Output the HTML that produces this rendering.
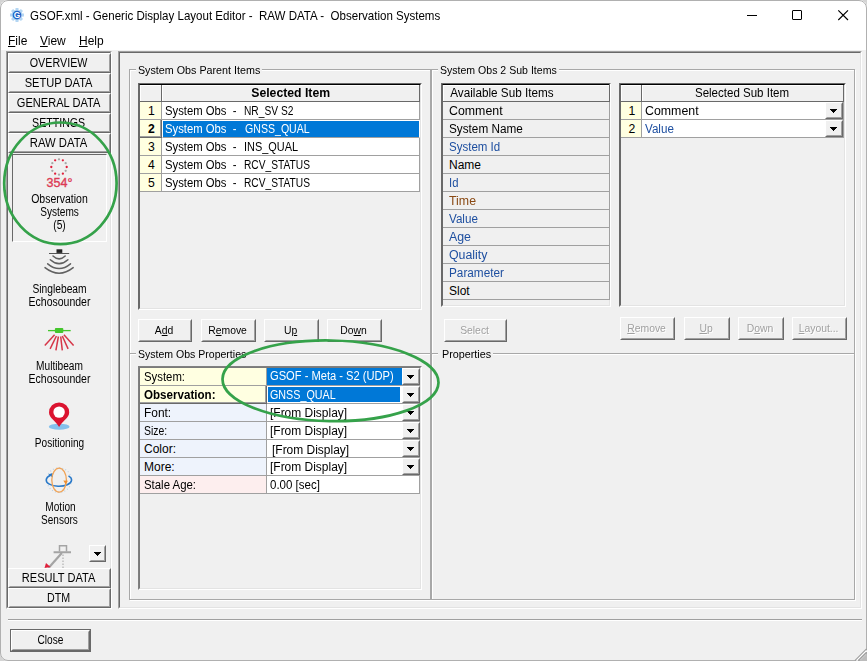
<!DOCTYPE html>
<html><head><meta charset="utf-8">
<title>GSOF.xml - Generic Display Layout Editor</title>
<style>
*{box-sizing:border-box;margin:0;padding:0}
html,body{width:867px;height:661px;overflow:hidden;background:#d4d4d4}
body{font-family:"Liberation Sans",sans-serif;font-size:12px;color:#000;position:relative}
.abs{position:absolute}
#win{position:absolute;left:0;top:0;width:867px;height:661px;background:#f0f0f0;border-radius:8px 8px 0 8px;overflow:hidden}
#frame{position:absolute;left:0;top:0;width:867px;height:661px;border:1px solid #b0b0b0;border-radius:8px 8px 0 8px;z-index:50}
#top{position:absolute;left:0;top:0;width:867px;height:50px;background:#fff}
.t{position:absolute;white-space:pre;line-height:14px;font-size:12.3px;transform:scaleX(.975);transform-origin:0 50%}
.sunk{position:absolute;border:1px solid;border-color:#a0a0a0 #fff #fff #a0a0a0}
.sunk>.in{position:absolute;left:0;top:0;right:0;bottom:0;border:1px solid;border-color:#696969 #e3e3e3 #e3e3e3 #696969}
.btn{position:absolute;border:1px solid;border-color:#fff #696969 #696969 #fff;background:#f0f0f0}
.btn>.in{position:absolute;left:0;top:0;right:0;bottom:0;border:1px solid;border-color:#f0f0f0 #a0a0a0 #a0a0a0 #f0f0f0}
.btn span{position:absolute;left:0;right:0;text-align:center;white-space:nowrap}
.nav{left:8px;width:103px;height:20px}
.nav span{top:2px;padding-right:2px;font-size:12px;line-height:14px;transform:scaleX(0.89)}
.pb span{top:3px;padding-right:2px;font-size:11px;line-height:14px;transform:scaleX(.943)}
.pb.dis span{color:#a0a0a0;text-shadow:1px 1px 0 #fff}
.lbl{position:absolute;font-size:12px;line-height:13px;text-align:center;left:8px;width:103px;white-space:nowrap;transform:scaleX(0.875)}
.grp{position:absolute;border:1px solid #a8a8a8;box-shadow:1px 1px 0 #fff, inset 1px 1px 0 #fff}
.grp>b{position:absolute;left:5.500px;top:-7px;background:#f0f0f0;font-weight:normal;padding:0 2px;font-size:11px;line-height:14px;white-space:nowrap;transform:scaleX(.943);transform-origin:0 50%}
.grid{position:absolute;border:1px solid;border-color:#696969 #fff #fff #696969;background:#f0f0f0}
.grid>.in{position:absolute;left:0;top:0;right:0;bottom:0;border:1px solid;border-color:#000 #e3e3e3 #e3e3e3 #696969}
.c{position:absolute;white-space:pre;font-size:12px;line-height:14px;border-right:1px solid #a0a0a0;border-bottom:1px solid #a0a0a0;overflow:hidden;padding:2px 0 0 3px;background:#fff}
.g{background:#f0f0f0;padding-left:6px}
.x{display:inline-block;transform-origin:0 50%}
.h .x,.n .x{transform-origin:50% 50%}
.g2{border-color:#808080 #fff #fff #808080}
.g2>.in{border-color:#7a7a7a #e3e3e3 #e3e3e3 #7a7a7a}
.h{background:#f0f0f0;text-align:center;padding-left:0;padding-top:1px;border-color:#696969;box-shadow:inset 1px 1px 0 #fff}
.n{background:#ffffe1;text-align:center;padding-left:2px;font-size:12.2px}
.bl{color:#1e4fa0}
.br{color:#8a4a14}
.cb{position:absolute;width:18px;height:17px;border:1px solid;border-color:#fff #696969 #696969 #fff;background:#f0f0f0}
.cb:before{content:"";position:absolute;left:0;top:0;right:0;bottom:0;border:1px solid;border-color:#f0f0f0 #a0a0a0 #a0a0a0 #f0f0f0}
.cb:after{content:"";position:absolute;left:4px;top:6px;width:1px;height:1px;background:#000;box-shadow:1px 0px 0 #000,2px 0px 0 #000,3px 0px 0 #000,4px 0px 0 #000,5px 0px 0 #000,6px 0px 0 #000,1px 1px 0 #000,2px 1px 0 #000,3px 1px 0 #000,4px 1px 0 #000,5px 1px 0 #000,2px 2px 0 #000,3px 2px 0 #000,4px 2px 0 #000,3px 3px 0 #000}
u{text-decoration:underline}
</style></head><body>
<div id="win">
<div id="top"></div>
<!-- title -->
<svg class="abs" style="left:10px;top:8px" width="14" height="14" viewBox="0 0 16 16"><g fill="#b4d6f3"><circle cx="8" cy="8" r="6.300"/><g id="tt"><rect x="6.300" y="0" width="3.400" height="3"/><rect x="6.300" y="13" width="3.400" height="3"/><rect x="0" y="6.300" width="3" height="3.400"/><rect x="13" y="6.300" width="3" height="3.400"/></g><use href="#tt" transform="rotate(45 8 8)"/></g><circle cx="8" cy="8" r="5" fill="#1f64c8"/><text x="8" y="11.400" font-size="9.500" font-weight="bold" fill="#fff" text-anchor="middle" font-family="Liberation Sans, sans-serif">G</text></svg>
<div class="t" style="left:30px;top:9px;font-size:12.2px;transform:scaleX(.947);transform-origin:0 50%">GSOF.xml - Generic Display Layout Editor -  RAW DATA -  Observation Systems</div>
<svg class="abs" style="left:740px;top:5px" width="120" height="20" viewBox="0 0 120 20"><g stroke="#000" stroke-width="1" fill="none"><path d="M7 10.5h10"/><rect x="52.5" y="5.5" width="9" height="9" rx="0.5"/><path d="M98.300 5.300l9.700 9.700M108 5.300l-9.700 9.700" stroke-width="1.150"/></g></svg>
<!-- menu -->
<div class="t" style="left:8px;top:34px"><u>F</u>ile</div>
<div class="t" style="left:40px;top:34px"><u>V</u>iew</div>
<div class="t" style="left:79px;top:34px"><u>H</u>elp</div>

<!-- left panel -->
<div class="sunk" style="left:6px;top:51px;width:106px;height:558px"><div class="in"></div></div>
<div class="btn nav" style="top:53px"><div class="in"></div><span style="transform:scaleX(0.895)">OVERVIEW</span></div>
<div class="btn nav" style="top:73px"><div class="in"></div><span style="transform:scaleX(0.925)">SETUP DATA</span></div>
<div class="btn nav" style="top:93px"><div class="in"></div><span style="transform:scaleX(0.922)">GENERAL DATA</span></div>
<div class="btn nav" style="top:113px"><div class="in"></div><span style="transform:scaleX(0.885)">SETTINGS</span></div>
<div class="btn nav" style="top:133px"><div class="in"></div><span style="transform:scaleX(0.94)">RAW DATA</span></div>
<div class="btn nav" style="top:568px"><div class="in"></div><span style="transform:scaleX(0.92)">RESULT DATA</span></div>
<div class="btn nav" style="top:588px"><div class="in"></div><span style="transform:scaleX(0.89)">DTM</span></div>

<!-- selected item box -->
<div class="abs" style="left:12px;top:154px;width:95px;height:88px;border:1px solid;border-color:#696969 #fff #fff #696969"></div>
<svg class="abs" style="left:49px;top:157px" width="20" height="20" viewBox="-10 -10 20 20">
<g fill="#a8a8a8"><circle cx="0" cy="-7.7" r="1.150"/><circle cx="6.67" cy="-3.85" r="1.150"/><circle cx="6.67" cy="3.85" r="1.150"/><circle cx="0" cy="7.7" r="1.150"/><circle cx="-6.67" cy="3.85" r="1.150"/><circle cx="-6.67" cy="-3.85" r="1.150"/></g>
<g fill="#e0203c"><circle cx="3.85" cy="-6.67" r="1.150"/><circle cx="7.7" cy="0" r="1.150"/><circle cx="3.85" cy="6.67" r="1.150"/><circle cx="-3.85" cy="6.67" r="1.150"/><circle cx="-7.7" cy="0" r="1.150"/><circle cx="-3.85" cy="-6.67" r="1.150"/></g></svg>
<div class="lbl" style="top:177px;font-size:12.5px;color:#dc3a55;-webkit-text-stroke:0.35px #dc3a55;transform:none;left:8px">354°</div>
<div class="lbl" style="top:193px;transform:scaleX(0.875)">Observation</div>
<div class="lbl" style="top:206px;transform:scaleX(0.84)">Systems</div>
<div class="lbl" style="top:219px;transform:scaleX(0.85)">(5)</div>

<!-- singlebeam -->
<svg class="abs" style="left:40px;top:240px" width="40" height="40" viewBox="40 240 40 40"><rect x="56.5" y="249.3" width="5.8" height="3.6" fill="#222"/><path d="M49 253.5h20.200" stroke="#555" stroke-width="1"/><g fill="none" stroke="#606060" stroke-width="1.5" stroke-linecap="round"><path d="M53 256q6.100 5.800 12.200 0"/><path d="M50.300 259.700q8.800 7.900 17.600 0"/><path d="M47.700 263.800q11.400 9.400 22.800 0"/><path d="M45 267.600q14.100 11.200 28.200 0"/></g></svg>
<div class="lbl" style="top:283px;transform:scaleX(0.855)">Singlebeam</div>
<div class="lbl" style="top:296px;transform:scaleX(0.875)">Echosounder</div>
<!-- multibeam -->
<svg class="abs" style="left:40px;top:320px" width="40" height="36" viewBox="40 320 40 36"><path d="M48 330.600h22.700" stroke="#44c62c" stroke-width="1.300"/><rect x="54.900" y="328" width="8.400" height="4.900" rx="1" fill="#44c62c"/><g stroke="#d63648" stroke-width="1.500" fill="none"><path d="M54.600 334.800L44.800 345.500"/><path d="M56.400 336L50.100 348.900"/><path d="M58.400 336.500L55.900 350.400"/><path d="M60.700 336.500L62.300 350.400"/><path d="M62.300 336L68.100 348.900"/><path d="M63.900 334.800L73.600 345.500"/></g></svg>
<div class="lbl" style="top:360px;transform:scaleX(0.845)">Multibeam</div>
<div class="lbl" style="top:373px;transform:scaleX(0.875)">Echosounder</div>
<!-- positioning -->
<svg class="abs" style="left:40px;top:398px" width="40" height="36" viewBox="40 398 40 36"><ellipse cx="59.200" cy="426.700" rx="10.400" ry="3" fill="#85c1ec"/><path d="M59.100 427C56 421 49 418 49 412.500a10.100 10.100 0 0 1 20.200 0C69.200 418 62.200 421 59.100 427z" fill="#db1430"/><circle cx="59.100" cy="412.100" r="5.700" fill="#fff"/></svg>
<div class="lbl" style="top:437px;transform:scaleX(0.84)">Positioning</div>
<!-- motion -->
<svg class="abs" style="left:40px;top:462px" width="40" height="36" viewBox="40 462 40 36"><circle cx="59.100" cy="480.100" r="12.300" fill="none" stroke="#b8cfe4" stroke-width="1.100" stroke-dasharray="1 2.200"/><path d="M50.500 475.300A12.700 6.300 0 1 0 68.500 475.900" fill="none" stroke="#2878c8" stroke-width="1.500"/><path d="M48.300 474.600l4.200-1.500 0.300 4.300z" fill="#2878c8"/><ellipse cx="59.100" cy="480.100" rx="7.300" ry="12" fill="none" stroke="#f0a458" stroke-width="1.300"/><path d="M63.300 480.600l4.600 0.200-2.200 3.600z" fill="#f09030"/></svg>
<div class="lbl" style="top:501px;left:9px;transform:scaleX(0.84)">Motion</div>
<div class="lbl" style="top:514px;transform:scaleX(0.835)">Sensors</div>
<!-- partial icon -->
<svg class="abs" style="left:40px;top:540px" width="40" height="28" viewBox="40 540 40 28"><g stroke="#a4a4a4" fill="none"><path d="M59.500 551.500v-5.700h7v5.700" stroke-width="1.500"/><path d="M53.600 552.200h17.400" stroke-width="2"/><path d="M61.800 553L48.500 568" stroke-width="2.200"/><path d="M63 554.500v14" stroke-width="1.300" stroke-dasharray="1.500 1.500" stroke="#b4b4b4"/></g><path d="M44.500 568l1.500-5 4.500 4z" fill="#e0203c"/></svg>
<div class="cb" style="left:89px;top:545px;width:17px;height:17px"></div>

<!-- main panel -->
<div class="sunk" style="left:118px;top:51px;width:744px;height:558px"><div class="in"></div></div>

<!-- group boxes -->
<div class="grp" style="left:129px;top:69px;width:302px;height:285px"><b style="transform:scaleX(0.976)">System Obs Parent Items</b></div>
<div class="grp" style="left:129px;top:353px;width:302px;height:247px"><b style="transform:scaleX(0.958)">System Obs Properties</b></div>
<div class="grp" style="left:431px;top:69px;width:424px;height:285px"><b style="transform:scaleX(.96)">System Obs 2 Sub Items</b></div>
<div class="grp" style="left:431px;top:353px;width:424px;height:247px"><b style="padding-left:4px;transform:scaleX(0.982)">Properties</b></div>

<!-- grid 1 -->
<div class="grid" style="left:138px;top:83px;width:284px;height:227px"><div class="in"></div></div>
<div class="c h" style="left:140px;top:85px;width:22px;height:17px"></div>
<div class="c h" style="left:162px;top:85px;width:258px;height:17px;font-weight:bold"><span class="x" style="transform:scaleX(1.02)">Selected Item</span></div>
<div class="c n" style="left:140px;top:102px;width:22px;height:18px"><span class="x" style="transform:scaleX(1.0)">1</span></div><div class="c" style="left:162px;top:102px;width:258px;height:18px"><span class="x" style="transform:scaleX(.94)">System Obs  -</span><span class="x" style="position:absolute;left:81.7px;transform:scaleX(0.851)">NR_SV S2</span></div>
<div class="c n" style="left:140px;top:120px;width:22px;height:18px;font-weight:bold;border-color:#696969;box-shadow:inset -1px -1px 0 #a0a0a0"><span class="x" style="transform:scaleX(1.0)">2</span></div><div class="c" style="left:162px;top:120px;width:258px;height:18px;background:#0078d7;color:#fff;border:1px solid #fff;border-bottom-color:#a0a0a0;padding:1px 0 0 2px"><span class="x" style="transform:scaleX(.94)">System Obs  -</span><span class="x" style="position:absolute;left:81.7px;transform:scaleX(0.882)">GNSS_QUAL</span></div>
<div class="c n" style="left:140px;top:138px;width:22px;height:18px"><span class="x" style="transform:scaleX(1.0)">3</span></div><div class="c" style="left:162px;top:138px;width:258px;height:18px"><span class="x" style="transform:scaleX(.94)">System Obs  -</span><span class="x" style="position:absolute;left:81.7px;transform:scaleX(0.91)">INS_QUAL</span></div>
<div class="c n" style="left:140px;top:156px;width:22px;height:18px"><span class="x" style="transform:scaleX(1.0)">4</span></div><div class="c" style="left:162px;top:156px;width:258px;height:18px"><span class="x" style="transform:scaleX(.94)">System Obs  -</span><span class="x" style="position:absolute;left:81.7px;transform:scaleX(0.85)">RCV_STATUS</span></div>
<div class="c n" style="left:140px;top:174px;width:22px;height:18px"><span class="x" style="transform:scaleX(1.0)">5</span></div><div class="c" style="left:162px;top:174px;width:258px;height:18px"><span class="x" style="transform:scaleX(.94)">System Obs  -</span><span class="x" style="position:absolute;left:81.7px;transform:scaleX(0.85)">RCV_STATUS</span></div>

<!-- buttons under grid 1 -->
<div class="btn pb" style="left:138px;top:319px;width:54px;height:23px"><div class="in"></div><span>A<u>d</u>d</span></div>
<div class="btn pb" style="left:201px;top:319px;width:55px;height:23px"><div class="in"></div><span>R<u>e</u>move</span></div>
<div class="btn pb" style="left:264px;top:319px;width:55px;height:23px"><div class="in"></div><span>U<u>p</u></span></div>
<div class="btn pb" style="left:327px;top:319px;width:55px;height:23px"><div class="in"></div><span>Do<u>w</u>n</span></div>

<!-- props grid -->
<div class="grid g2" style="left:138px;top:366px;width:284px;height:224px"><div class="in"></div></div>
<div class="c" style="left:140px;top:368px;width:127px;height:18px;background:#ffffe1;padding-left:4px"><span class="x" style="transform:scaleX(0.946)">System:</span></div>
<div class="c" style="left:267px;top:368px;width:153px;height:18px;background:#0078d7;color:#fff;padding-top:1px"><span class="x" style="transform:scaleX(0.928)">GSOF - Meta - S2 (UDP)</span></div>
<div class="c" style="left:140px;top:386px;width:127px;height:18px;background:#ffffe1;padding-left:4px;font-weight:bold;border-color:#696969;box-shadow:inset -1px -1px 0 #a0a0a0"><span class="x" style="transform:scaleX(0.966)">Observation:</span></div>
<div class="c" style="left:267px;top:386px;width:153px;height:18px"><div class="abs" style="left:1px;top:1px;width:132px;height:15px;background:#0078d7;color:#fff;padding-left:2px;padding-top:1px"><span class="x" style="transform:scaleX(0.895)">GNSS_QUAL</span></div></div>
<div class="c" style="left:140px;top:404px;width:127px;height:18px;background:#eef3fc;padding-left:4px"><span class="x" style="transform:scaleX(0.994)">Font:</span></div><div class="c" style="left:267px;top:404px;width:153px;height:18px"><span class="x" style="transform:scaleX(0.997)">[From Display]</span></div>
<div class="c" style="left:140px;top:422px;width:127px;height:18px;background:#eef3fc;padding-left:4px"><span class="x" style="transform:scaleX(0.87)">Size:</span></div><div class="c" style="left:267px;top:422px;width:153px;height:18px"><span class="x" style="transform:scaleX(0.997)">[From Display]</span></div>
<div class="c" style="left:140px;top:440px;width:127px;height:18px;background:#eef3fc;padding-left:4px"><span class="x" style="transform:scaleX(1.0)">Color:</span></div><div class="c" style="left:267px;top:440px;width:153px;height:18px;padding:3px 0 0 5px"><span class="x" style="transform:scaleX(0.997)">[From Display]</span></div>
<div class="c" style="left:140px;top:458px;width:127px;height:18px;background:#eef3fc;padding-left:4px"><span class="x" style="transform:scaleX(1.0)">More:</span></div><div class="c" style="left:267px;top:458px;width:153px;height:18px"><span class="x" style="transform:scaleX(0.997)">[From Display]</span></div>
<div class="c" style="left:140px;top:476px;width:127px;height:18px;background:#fdeeee;padding-left:4px"><span class="x" style="transform:scaleX(0.95)">Stale Age:</span></div><div class="c" style="left:267px;top:476px;width:153px;height:18px"><span class="x" style="transform:scaleX(0.96)">0.00 [sec]</span></div>
<div class="cb" style="left:402px;top:368px"></div>
<div class="cb" style="left:402px;top:386px"></div>
<div class="cb" style="left:402px;top:404px"></div>
<div class="cb" style="left:402px;top:422px"></div>
<div class="cb" style="left:402px;top:440px"></div>
<div class="cb" style="left:402px;top:458px"></div>

<!-- available sub items -->
<div class="grid" style="left:441px;top:83px;width:170px;height:224px"><div class="in"></div></div>
<div class="c h" style="left:443px;top:85px;width:167px;height:17px;text-align:left;padding-left:6px"><span class="x" style="transform:scaleX(0.976)">Available Sub Items</span></div>
<div class="c g" style="left:443px;top:102px;width:167px;height:18px"><span class="x" style="transform:scaleX(1.03)">Comment</span></div>
<div class="c g" style="left:443px;top:120px;width:167px;height:18px"><span class="x" style="transform:scaleX(0.98)">System Name</span></div>
<div class="c g bl" style="left:443px;top:138px;width:167px;height:18px"><span class="x" style="transform:scaleX(0.96)">System Id</span></div>
<div class="c g" style="left:443px;top:156px;width:167px;height:18px"><span class="x" style="transform:scaleX(1.0)">Name</span></div>
<div class="c g bl" style="left:443px;top:174px;width:167px;height:18px"><span class="x" style="transform:scaleX(0.94)">Id</span></div>
<div class="c g br" style="left:443px;top:192px;width:167px;height:18px"><span class="x" style="transform:scaleX(1.03)">Time</span></div>
<div class="c g bl" style="left:443px;top:210px;width:167px;height:18px"><span class="x" style="transform:scaleX(0.97)">Value</span></div>
<div class="c g bl" style="left:443px;top:228px;width:167px;height:18px"><span class="x" style="transform:scaleX(1.03)">Age</span></div>
<div class="c g bl" style="left:443px;top:246px;width:167px;height:18px"><span class="x" style="transform:scaleX(1.03)">Quality</span></div>
<div class="c g bl" style="left:443px;top:264px;width:167px;height:18px"><span class="x" style="transform:scaleX(0.98)">Parameter</span></div>
<div class="c g" style="left:443px;top:282px;width:167px;height:18px"><span class="x" style="transform:scaleX(1.0)">Slot</span></div>

<!-- selected sub item -->
<div class="grid" style="left:619px;top:83px;width:227px;height:224px"><div class="in"></div></div>
<div class="c h" style="left:621px;top:85px;width:21px;height:17px"></div>
<div class="c h" style="left:642px;top:85px;width:202px;height:17px"><span class="x" style="transform:scaleX(0.96)">Selected Sub Item</span></div>
<div class="c n" style="left:621px;top:102px;width:21px;height:18px"><span class="x" style="transform:scaleX(1.0)">1</span></div><div class="c" style="left:642px;top:102px;width:202px;height:18px"><span class="x" style="transform:scaleX(1.03)">Comment</span></div>
<div class="c n" style="left:621px;top:120px;width:21px;height:18px"><span class="x" style="transform:scaleX(1.0)">2</span></div><div class="c bl" style="left:642px;top:120px;width:202px;height:18px"><span class="x" style="transform:scaleX(0.97)">Value</span></div>
<div class="cb" style="left:825px;top:102px"></div>
<div class="cb" style="left:825px;top:120px"></div>

<div class="btn pb dis" style="left:444px;top:319px;width:63px;height:23px"><div class="in"></div><span>Select</span></div>
<div class="btn pb dis" style="left:620px;top:317px;width:55px;height:23px"><div class="in"></div><span><u>R</u>emove</span></div>
<div class="btn pb dis" style="left:684px;top:317px;width:46px;height:23px"><div class="in"></div><span><u>U</u>p</span></div>
<div class="btn pb dis" style="left:738px;top:317px;width:46px;height:23px"><div class="in"></div><span>D<u>o</u>wn</span></div>
<div class="btn pb dis" style="left:792px;top:317px;width:55px;height:23px"><div class="in"></div><span><u>L</u>ayout...</span></div>

<!-- bottom -->
<div class="abs" style="left:8px;top:619px;width:854px;height:2px;border-top:1px solid #a0a0a0;border-bottom:1px solid #fff"></div>
<div class="abs" style="left:10px;top:629px;width:81px;height:23px;border:1px solid #696969;background:#f0f0f0"><div class="abs" style="left:0;top:0;right:0;bottom:0;border:1px solid;border-color:#fff #696969 #696969 #fff"></div><div class="abs" style="left:1px;top:1px;right:1px;bottom:1px;border:1px solid;border-color:#f0f0f0 #a0a0a0 #a0a0a0 #f0f0f0"></div><span class="abs" style="left:0;right:0;top:3px;text-align:center;font-size:12px;line-height:14px;transform:scaleX(.845)">Close</span></div>

<!-- annotations -->
<svg class="abs" style="left:0;top:0;z-index:40" width="867" height="661" viewBox="0 0 867 661"><g fill="none" stroke="#35a24a" stroke-width="2.7"><ellipse cx="60.4" cy="183.3" rx="56.2" ry="60.8"/><ellipse cx="330.5" cy="380.8" rx="108" ry="40.3" transform="rotate(1 330.5 380.8)"/></g></svg>
<!-- grip -->
<svg class="abs" style="left:847px;top:641px;z-index:60" width="20" height="20" viewBox="847 641 20 20"><path d="M859.500 661L867 653.500V661z" fill="#bcbcbc"/><path d="M855 660.700L866.700 649" stroke="#a0a0a0" stroke-width="1.600"/><path d="M856.600 660.700L866.700 650.600" stroke="#fff" stroke-width="1.400"/><path d="M858.200 660.700L866.700 652.200" stroke="#a0a0a0" stroke-width="1.600"/></svg>
</div>
<div id="frame"></div>
</body></html>
